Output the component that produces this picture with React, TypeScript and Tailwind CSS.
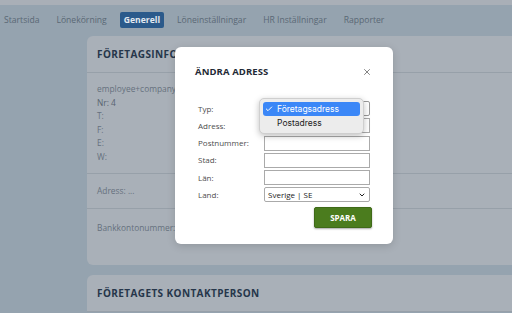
import { X, Check, ChevronDown } from 'lucide-react';

const navItems = ['Startsida', 'Lönekörning', 'Generell', 'Löneinställningar', 'HR Inställningar', 'Rapporter'];

const formRows = ['Postnummer:', 'Stad:', 'Län:'];

export default function App() {
  return (
    <div className="relative w-[512px] h-[313px] overflow-hidden bg-[#95a3af] font-['Open_Sans',sans-serif]">
      {/* top strip */}
      <div className="h-[5px] bg-[#a9afb7]" />

      {/* nav */}
      <div className="h-[30px] flex items-center gap-[17px] pl-[4px] text-[8.6px] text-[#5a6875]">
        {navItems.map(item =>
          item === 'Generell' ? (
            <span key={item} className="bg-[#2b5a8b] text-[#e3e9f0] font-bold px-[4px] py-[2px] rounded-[2px] -mx-[4px]">
              {item}
            </span>
          ) : (
            <span key={item}>{item}</span>
          )
        )}
      </div>

      {/* page content */}
      <div className="pl-[87px] pt-px">
        <div className="bg-[#a9b0b8] rounded-tl-[6px] rounded-bl-[6px]">
          <div className="h-[37px] flex items-center pl-[10px] border-b border-[#97a0a9]">
            <span className="text-[10px] font-bold tracking-[0.04em] text-[#26364a]">FÖRETAGSINFORMATION</span>
          </div>
          <div className="h-[101px] pl-[10px] pt-[9px] text-[8.4px] text-[#66717e] leading-[13.5px] border-b border-[#97a0a9]">
            <div>employee+company logo</div>
            <div className="text-[#58636f]">Nr: 4</div>
            <div>T:</div>
            <div>F:</div>
            <div>E:</div>
            <div>W:</div>
          </div>
          <div className="h-[35px] flex items-center pl-[10px] text-[8.4px] text-[#66717e] border-b border-[#97a0a9]">
            Adress: ...
          </div>
          <div className="h-[56px] pl-[10px] pt-[13px] text-[8.4px] text-[#66717e]">Bankkontonummer: ...</div>
        </div>

        <div className="mt-[10px] bg-[#a9b0b8] rounded-tl-[6px]">
          <div className="h-[37px] flex items-center pl-[10px] border-b border-[#97a0a9]">
            <span className="text-[10px] font-bold tracking-[0.04em] text-[#26364a]">FÖRETAGETS KONTAKTPERSON</span>
          </div>
        </div>
      </div>

      {/* modal */}
      <div className="absolute left-[175px] top-[47px] w-[218px] h-[197px] bg-white rounded-[6px] shadow-[0_2px_8px_rgba(0,0,0,0.15)]">
        <div className="flex items-center justify-between pl-[20px] pr-[21px] pt-[18px]">
          <span className="text-[9.5px] font-bold tracking-[0.01em] text-[#1f2a36]">ÄNDRA ADRESS</span>
          <X className="w-[10px] h-[10px] text-[#6b6b6b]" strokeWidth={2} />
        </div>

        <div className="mt-[22px] pl-[23px] pr-[23px] flex flex-col gap-[2.2px] text-[8px] text-[#4d4d4d]">
          <div className="flex items-center h-[15px]">
            <span className="w-[66px]">Typ:</span>
            <div className="flex-1 h-[15px] border border-[#999] rounded-[2px]" />
          </div>
          <div className="flex items-center h-[15px]">
            <span className="w-[66px]">Adress:</span>
            <div className="flex-1 h-[15px] border border-[#aaa]" />
          </div>
          {formRows.map(label => (
            <div key={label} className="flex items-center h-[15px]">
              <span className="w-[66px]">{label}</span>
              <div className="flex-1 h-[15px] border border-[#aaa]" />
            </div>
          ))}
          <div className="flex items-center h-[15px]">
            <span className="w-[66px]">Land:</span>
            <div className="flex-1 h-[15px] border border-[#aaa] rounded-[2px] flex items-center justify-between pl-[3px] pr-[3px] text-[#222]">
              <span>Sverige | SE</span>
              <ChevronDown className="w-[8px] h-[8px] text-[#222]" strokeWidth={3} />
            </div>
          </div>
        </div>

        <div className="flex justify-end pr-[21px] mt-[5px]">
          <button className="w-[58px] h-[21px] bg-[#4b7c1e] border border-[#3f6a18] text-white text-[8px] font-bold rounded-[2px] shadow-[0_1px_2px_rgba(0,0,0,0.35)]">
            SPARA
          </button>
        </div>
      </div>

      {/* native select dropdown */}
      <div className="absolute left-[259px] top-[98px] w-[105px] h-[36px] bg-[#ececec] border border-[#cfcfcf] rounded-[5px] shadow-[0_2px_6px_rgba(0,0,0,0.25)] p-[3px] font-['Inter',sans-serif] text-[8.5px]">
        <div className="h-[14px] flex items-center bg-[#3b87f7] text-white rounded-[3px] pl-[2px]">
          <Check className="w-[8px] h-[8px] mr-[4px]" strokeWidth={3} />
          <span>Företagsadress</span>
        </div>
        <div className="h-[15px] flex items-center pl-[14px] text-[#222]">Postadress</div>
      </div>
    </div>
  );
}
